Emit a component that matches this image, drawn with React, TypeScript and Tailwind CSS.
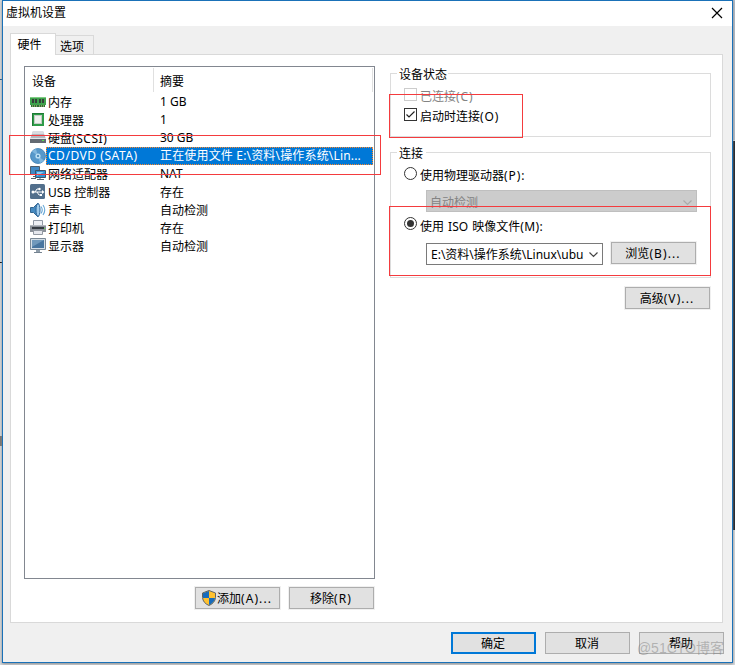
import React from "react";

const hardware = [
  { icon: "memory", name: "内存", value: "1 GB", latin: true },
  { icon: "cpu", name: "处理器", value: "1", latin: true },
  { icon: "disk", name: "硬盘", suffix: "(SCSI)", value: "30 GB", latin: true },
  { icon: "cd", name: "", suffix: "CD/DVD (SATA)", value: "正在使用文件 E:\\资料\\操作系统\\Lin..." },
  { icon: "net", name: "网络适配器", value: "NAT", latin: true },
  { icon: "usb", name: "USB 控制器", value: "存在" },
  { icon: "sound", name: "声卡", value: "自动检测" },
  { icon: "printer", name: "打印机", value: "存在" },
  { icon: "display", name: "显示器", value: "自动检测" },
];

function DeviceIcon({ kind }: { kind: string }) {
  const art: Record<string, React.ReactNode> = {
    memory: (
      <>
        <path d="M0 3h16v8H0z" fill="#3fa24c" />
        <path d="M0 3h16v1H0z" fill="#7fcb83" />
        <path d="M2 5h2v4H2zM5 5h2v4H5zM9 5h2v4H9zM12 5h2v4h-2z" fill="#37403a" />
        <path d="M1 11h14v2H1z" fill="#2f6c35" />
        <path d="M2 11.500h1v1H2zM4 11.500h1v1H4zM6 11.500h1v1H6zM9 11.500h1v1H9zM11 11.500h1v1h-1zM13 11.500h1v1h-1z" fill="#d5d48a" />
      </>
    ),
    cpu: (
      <>
        <path d="M2 1h12v13H2z" fill="#2e9b48" />
        <path d="M2 1h12v1H3v12H2z" fill="#1d7934" />
        <path d="M4 3h8v9H4z" fill="#c4cbc5" />
        <path d="M5 4h6v7H5z" fill="#edf0ed" />
      </>
    ),
    disk: (
      <>
        <path d="M3 1h10l3 8H0z" fill="#b2b7be" />
        <path d="M3 1h10l1 3H2z" fill="#d9dce0" />
        <path d="M0 9h16v4H0z" fill="#636a73" />
        <path d="M0 8h16v1H0z" fill="#e3e6e9" />
        <path d="M12 10h2v1h-2z" fill="#58df4b" />
      </>
    ),
    cd: (
      <>
        <circle cx="8" cy="8" r="7.500" fill="#5798ca" stroke="#3b7fb5" strokeWidth=".8" />
        <path d="M8 8 2 3.500A7 7 0 0 1 6 1zM8 8l6 4.500a7 7 0 0 1-4 2.500z" fill="#80b7de" />
        <circle cx="8" cy="8" r="2.600" fill="#b9def4" />
        <circle cx="8" cy="8" r="1" fill="#3577aa" />
      </>
    ),
    net: (
      <>
        <path d="M.5.500h9v8h-9z" fill="#4189c5" stroke="#4d5c6b" />
        <path d="M3 10.500h3M1 12.500h5" stroke="#55616d" />
        <path d="M5.500 4.500h10v7h-10z" fill="#2f8ed3" stroke="#3d5368" />
        <path d="M7 6h7l-7 4z" fill="#8bcdf5" />
        <path d="M7 13.500h7M10 12v2" stroke="#596673" />
      </>
    ),
    usb: (
      <>
        <rect x="0" y="0" width="15" height="15" rx="1.500" fill="#526f8c" />
        <path d="M2 8h11M5 8l2-3h2M7 8l2 3h2" stroke="#fff" fill="none" />
        <circle cx="3" cy="8" r="1.500" fill="#fff" />
        <circle cx="9.500" cy="5" r="1.200" fill="#fff" />
        <path d="M10 10h2v2h-2zM12 6l2.500 2-2.500 2z" fill="#fff" />
      </>
    ),
    sound: (
      <>
        <path d="M.5 5.500h3L8 1v14l-4.500-4.500h-3z" fill="#478bc1" stroke="#33658f" />
        <ellipse cx="8" cy="8" rx="2" ry="6.500" fill="#9fcaea" stroke="#2e679b" />
        <path d="M11 4.500q2.500 3.500 0 7M13 3q3.500 5 0 10" fill="none" stroke="#65a7d7" strokeWidth="1.100" />
      </>
    ),
    printer: (
      <>
        <path d="M3.500.500h9v5h-9z" fill="#eef0f5" stroke="#9199a5" />
        <path d="M0 5h16v7H0z" fill="#8b919a" />
        <path d="M0 5h16v1H0z" fill="#b3b8bf" />
        <path d="M2 7h12v2H2z" fill="#353b42" />
        <path d="M3.500 10.500h9v4h-9z" fill="#e5e7ed" stroke="#9299a2" />
        <path d="M14 8h1v1h-1z" fill="#5ce54e" />
      </>
    ),
    display: (
      <>
        <path d="M.5.500h15v11H.5z" fill="#d5dfe7" stroke="#7a8997" />
        <path d="M2 2h12v8H2z" fill="#48759f" />
        <path d="M2 2h12L2 9z" fill="#7199bb" />
        <path d="M6 12h4v2H6z" fill="#8f9da9" />
        <path d="M4 14.500h8" stroke="#758391" />
      </>
    ),
  };
  return (
    <svg viewBox="0 0 16 16" className="h-4 w-4 shrink-0">
      {art[kind]}
    </svg>
  );
}

function Button({ children, suffix, primary = false }: { children: React.ReactNode; suffix?: string; primary?: boolean }) {
  return (
    <button
      className={
        "flex h-[22px] w-[85px] shrink-0 items-center justify-center whitespace-nowrap bg-[#e1e1e1] pt-0.5 pr-px " +
        (primary ? "border-2 border-[#0078d7]" : "border border-[#adadad] outline outline-[#f0f0f0]")
      }
    >
      {children}
      {suffix && <span className="tracking-[1.1px]">{suffix}</span>}
    </button>
  );
}

function Chevron({ color }: { color: string }) {
  return (
    <svg viewBox="0 0 9 6" className="h-1.5 w-[9px] shrink-0">
      <path d="m.5.500 4 4 4-4" fill="none" stroke={color} strokeWidth="1.200" />
    </svg>
  );
}

function Radio({ checked = false }: { checked?: boolean }) {
  return (
    <span className="mb-[3px] flex h-[13px] w-[13px] shrink-0 items-center justify-center rounded-full border border-[#333] bg-white">
      {checked && <span className="h-[7px] w-[7px] rounded-full bg-[#333]" />}
    </span>
  );
}

function DeviceList() {
  return (
    <div className="h-[513px] w-[351px] border border-[#828790] bg-white">
      <div className="flex h-[26px] pt-px">
        <span className="h-6 w-[129px] border-r border-[#e0e0e0] pt-1.5 pl-[7px]">设备</span>
        <span className="h-6 w-[219px] border-r border-[#e0e0e0] pt-1.5 pl-1.5">摘要</span>
      </div>
      {hardware.map((item, i) => (
        <div key={item.icon} className="flex h-[18px] items-center pr-px pl-[5px]">
          <DeviceIcon kind={item.icon} />
          <div
            className={
              "flex h-[18px] min-w-0 grow items-center border border-dotted whitespace-nowrap " +
              (i === 3 ? "border-[#ff8728] bg-[#0078d7] text-white" : "border-transparent pt-px")
            }
          >
            <span className="w-[113px] shrink-0 pl-px">
              {item.name}
              {item.suffix && <span className="tracking-[0.54px]">{item.suffix}</span>}
            </span>
            <span className={i === 3 ? "tracking-[0.17px]" : item.latin ? "-mt-0.5" : ""}>{item.value}</span>
          </div>
        </div>
      ))}
    </div>
  );
}

function Settings() {
  return (
    <div className="-ml-px flex w-[322px] flex-col pt-[7px] pl-px">
      <fieldset className="h-16 border border-[#dcdcdc]">
        <div className="-mt-[7px] ml-1.5 flex h-4 w-[51px] items-center bg-white pl-0.5">设备状态</div>
        <div className="mt-[5px] ml-[13px] flex h-4 items-center gap-[3px] text-[#838383]">
          <span className="mb-[3px] h-[13px] w-[13px] border border-[#ccc]" />
          <span className="pt-0.5">已连接<span className="tracking-[0.9px]">(C)</span></span>
        </div>
        <div className="mt-1 ml-[13px] flex h-4 items-center gap-[3px]">
          <span className="mb-[3px] flex h-[13px] w-[13px] border border-[#333]">
            <svg viewBox="0 0 11 11" className="h-[11px] w-[11px]">
              <path d="m1.500 5.500 2.500 2.500 5.500-5.500" fill="none" stroke="#222" strokeWidth="1.200" />
            </svg>
          </span>
          <span className="pt-0.5">启动时连接<span className="tracking-[0.9px]">(O)</span></span>
        </div>
      </fieldset>
      <fieldset className="mt-[15px] h-[126px] border border-[#dcdcdc]">
        <div className="-mt-[7px] ml-1.5 flex h-4 w-[29px] items-center bg-white pl-0.5">连接</div>
        <div className="mt-[5px] ml-[13px] flex h-4 items-center gap-[3px]">
          <Radio /><span className="pt-0.5">使用物理驱动器<span className="tracking-[0.9px]">(P):</span></span>
        </div>
        <div className="mt-[7px] ml-[35px] flex h-[22px] w-[271px] items-center justify-between border border-[#bfbfbf] bg-[#ccc] pt-[3px] pr-1 pl-[3px] text-[#838383]">
          自动检测<Chevron color="#aaa" />
        </div>
        <div className="mt-1 ml-[13px] flex h-[18px] items-center gap-[3px]">
          <Radio checked /><span className="pt-[3px] [word-spacing:1px]">使用 ISO 映像文件<span className="tracking-[0.4px]">(M):</span></span>
        </div>
        <div className="mt-2 ml-[35px] flex gap-2">
          <div className="mt-px flex h-[22px] w-[177px] items-center justify-between border border-[#7a7a7a] pt-px pr-1 pl-1 whitespace-nowrap">
            E:\资料\操作系统\Linux\ubu<Chevron color="#444" />
          </div>
          <Button suffix="(B)...">浏览</Button>
        </div>
      </fieldset>
      <div className="mt-[9px] flex justify-end pr-px"><Button suffix="(V)...">高级</Button></div>
    </div>
  );
}

function Shield() {
  return (
    <svg viewBox="0 0 14 16" className="mb-0.5 h-4 w-3.5 shrink-0">
      <path d="M7 .5 13.500 3v4.500Q13 13 7 15.500 1 13 .5 7.500V3z" fill="#ffc12f" stroke="#606466" />
      <path d="M1 3.300 7 1v7H1zM7 8h6q-.5 4.500-6 7z" fill="#176cbd" />
    </svg>
  );
}

export default function App() {
  return (
    <main className="relative h-[665px] w-[735px] overflow-hidden bg-[#d9dcdf] pl-0.5 text-[12px] leading-4 text-black [font-family:'Noto_Sans','Noto_Sans_CJK_SC',sans-serif]">
      <div className="absolute top-0 right-0 h-[140px] w-0.5 bg-[#b5bdc8]" />
      <div className="absolute top-[141px] right-0 h-[389px] w-0.5 bg-[#151b22]" />
      <div className="absolute top-[79px] left-0 h-px w-0.5 bg-[#164f86]" />
      <div className="absolute top-[262px] left-0 h-px w-0.5 bg-black" />
      <div className="absolute top-[436px] left-0 h-2.5 w-0.5 bg-[#77736e]" />
      <section className="relative flex h-[663px] w-[731px] flex-col border border-[#1a71b8] bg-[#f0f0f0] shadow-[0_1px_3px_#888]">
        <header className="flex h-[25px] shrink-0 items-center justify-between bg-white pr-[9px] pl-[3px]">
          <span className="mb-px">虚拟机设置</span>
          <svg viewBox="0 0 12 12" className="mb-px h-3 w-3"><path d="m1 1 10 10M11 1 1 11" stroke="black" strokeWidth="1.200" /></svg>
        </header>
        <div className="mt-[7px] ml-[7px] flex h-[21px] shrink-0 items-end">
          <div className="z-10 -mb-px flex h-[22px] w-[46px] items-center justify-center border border-b-0 border-[#d9d9d9] bg-white pr-[7px]">硬件</div>
          <div className="flex h-[19px] w-[38px] items-center border border-b-0 border-l-0 border-[#d9d9d9] pt-1 pl-1">选项</div>
        </div>
        <div className="ml-[7px] h-[569px] w-[713px] shrink-0 border border-[#d9d9d9] bg-white pt-[11px] pl-[13px]">
          <div className="flex gap-[15px]">
            <div>
              <DeviceList />
              <div className="mt-2 flex justify-end gap-[9px] pr-px">
                <Button suffix="(A)..."><Shield /><span className="ml-px">添加</span></Button>
                <Button suffix="(R)">移除</Button>
              </div>
            </div>
            <Settings />
          </div>
        </div>
        <footer className="mt-[9px] flex justify-end gap-[9px] pr-2">
          <Button primary>确定</Button><Button>取消</Button><Button>帮助</Button>
        </footer>
      </section>
      <div className="pointer-events-none absolute top-[135px] left-[9px] h-10 w-[372px] border border-[#f43b3e]" />
      <div className="pointer-events-none absolute top-[94px] left-[389px] h-11 w-[134px] border border-[#f43b3e]" />
      <div className="pointer-events-none absolute top-[206px] left-[389px] h-[70px] w-[322px] border border-[#f43b3e]" />
      <div className="pointer-events-none absolute top-[638px] right-[11px] text-[14px] leading-5 whitespace-nowrap text-[#777]/45 [font-family:'Liberation_Sans','Noto_Sans_CJK_SC',sans-serif]">@51CTO博客</div>
    </main>
  );
}
